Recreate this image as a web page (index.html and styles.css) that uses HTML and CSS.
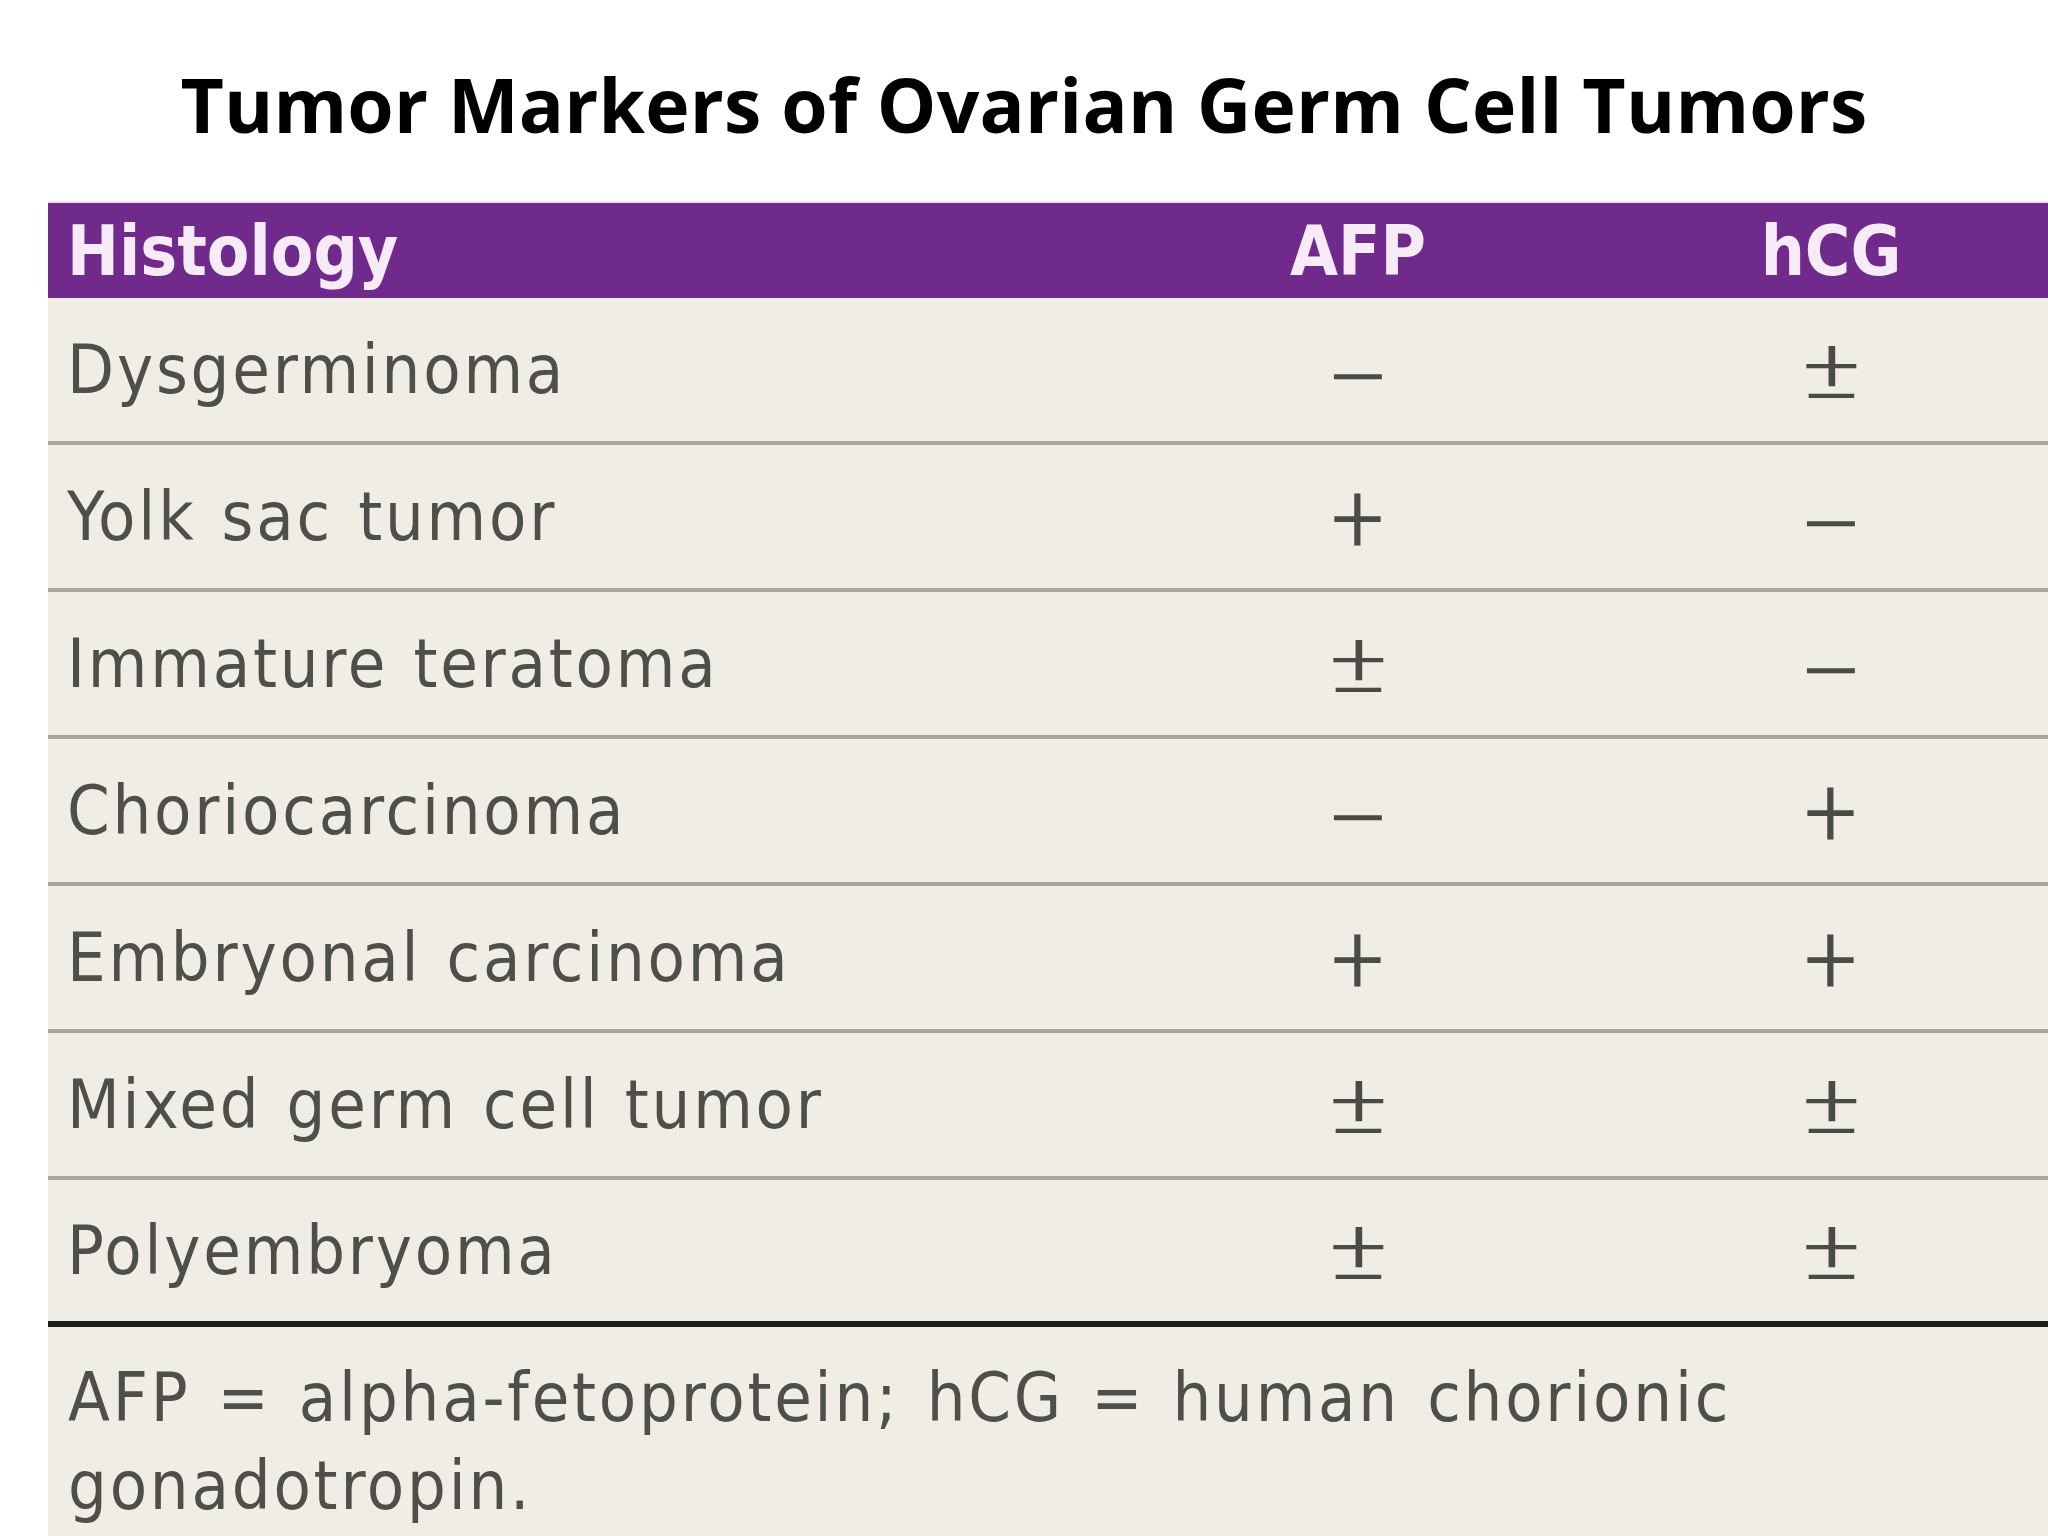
FILE: index.html
```html
<!DOCTYPE html>
<html lang="en">
<head>
<meta charset="utf-8">
<title>Tumor Markers of Ovarian Germ Cell Tumors</title>
<link rel="stylesheet" href="styles.css">
</head>
<body>
<main class="page">
  <h1 class="title">Tumor Markers of Ovarian Germ Cell Tumors</h1>
  <section class="sheet">
    <div class="row head">
      <div class="cell name">Histology</div>
      <div class="cell mark">AFP</div>
      <div class="cell mark">hCG</div>
    </div>
    <div class="row">
      <div class="cell name">Dysgerminoma</div>
      <div class="cell mark"><span class="sym minus">−</span></div>
      <div class="cell mark"><span class="sym pm">±</span></div>
    </div>
    <div class="row">
      <div class="cell name">Yolk sac tumor</div>
      <div class="cell mark"><span class="sym plus">+</span></div>
      <div class="cell mark"><span class="sym minus">−</span></div>
    </div>
    <div class="row">
      <div class="cell name">Immature teratoma</div>
      <div class="cell mark"><span class="sym pm">±</span></div>
      <div class="cell mark"><span class="sym minus">−</span></div>
    </div>
    <div class="row">
      <div class="cell name">Choriocarcinoma</div>
      <div class="cell mark"><span class="sym minus">−</span></div>
      <div class="cell mark"><span class="sym plus">+</span></div>
    </div>
    <div class="row">
      <div class="cell name">Embryonal carcinoma</div>
      <div class="cell mark"><span class="sym plus">+</span></div>
      <div class="cell mark"><span class="sym plus">+</span></div>
    </div>
    <div class="row">
      <div class="cell name">Mixed germ cell tumor</div>
      <div class="cell mark"><span class="sym pm">±</span></div>
      <div class="cell mark"><span class="sym pm">±</span></div>
    </div>
    <div class="row last">
      <div class="cell name">Polyembryoma</div>
      <div class="cell mark"><span class="sym pm">±</span></div>
      <div class="cell mark"><span class="sym pm">±</span></div>
    </div>
    <p class="note">AFP = alpha-fetoprotein; hCG = human chorionic gonadotropin.</p>
  </section>
</main>
</body>
</html>
```
FILE: styles.css
```css
html, body {
  margin: 0;
  padding: 0;
  background: #ffffff;
}

.page {
  width: 2048px;
  height: 1536px;
  overflow: hidden;
  display: flex;
  flex-direction: column;
}

.title {
  margin: 0;
  padding-top: 59px;
  height: 90px;
  line-height: 90px;
  font-family: "Open Sans", "Liberation Sans", sans-serif;
  font-weight: 700;
  font-size: 75px;
  color: #000000;
  text-align: center;
  letter-spacing: 0.2px;
}

.sheet {
  margin-top: 52px;
  margin-left: 48px;
  flex: 1;
  background: #f0ede4;
  font-family: "DejaVu Sans Condensed", "DejaVu Sans", sans-serif;
  font-stretch: condensed;
  color: #4e4e4b;
  border-top: 2px solid #efe3ee;
}

.row {
  display: grid;
  grid-template-columns: 1054px 512px 434px;
  align-items: center;
  height: 143px;
  border-bottom: 4px solid #a8a59d;
  font-size: 68px;
  line-height: 88px;
  letter-spacing: 2.8px;
  word-spacing: 3px;
}

.row.head {
  height: 95px;
  border-bottom: 0;
  background: #702a8c;
  color: #f7ebf7;
  font-weight: 700;
  font-size: 69px;
  letter-spacing: 0;
  word-spacing: 0;
}

.row.last {
  height: 141px;
  border-bottom: 6px solid #1c1c1a;
}

.cell.name {
  padding-left: 19px;
  white-space: nowrap;
}

.cell.mark {
  text-align: center;
  letter-spacing: 0;
}

.sym {
  display: inline-block;
  font-family: "Roboto", "DejaVu Sans", sans-serif;
  font-weight: 300;
  font-size: 100px;
  line-height: 100px;
  color: #4a4a47;
}

.sym.plus {
  transform: translateY(5px) scaleX(1.13);
}

.sym.minus {
  transform: translateY(12px) scaleX(1.4);
}

.sym.pm {
  transform: translateY(3px) scale(1.33, 0.83);
}

.note {
  margin: 0;
  padding: 27px 150px 0 20px;
  font-size: 68px;
  line-height: 88px;
  letter-spacing: 2.8px;
  word-spacing: 5px;
}
```
